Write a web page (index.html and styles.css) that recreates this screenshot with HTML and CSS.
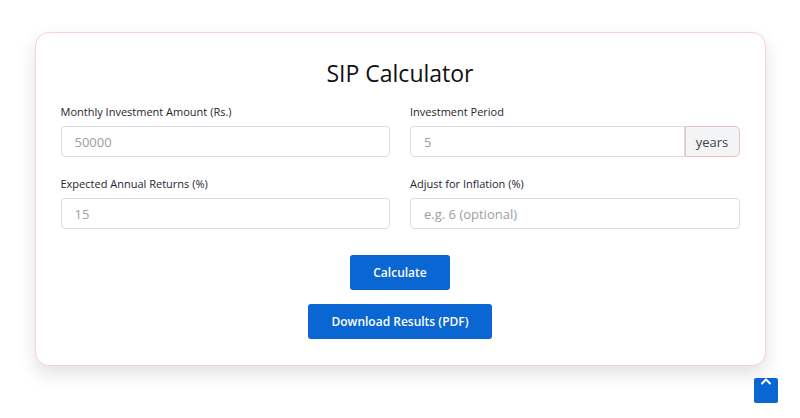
FILE: index.html
```html
<!DOCTYPE html>
<html>
<head>
<meta charset="utf-8">
<link rel="stylesheet" href="styles.css">
</head>
<body>
<div class="card">
  <h1 class="title">SIP Calculator</h1>
  <div class="grid">
    <div class="field">
      <label class="label">Monthly Investment Amount (Rs.)</label>
      <input class="input" placeholder="50000">
    </div>
    <div class="field">
      <label class="label">Investment Period</label>
      <div class="group">
        <input class="input input-group" placeholder="5">
        <span class="addon">years</span>
      </div>
    </div>
    <div class="field">
      <label class="label">Expected Annual Returns (%)</label>
      <input class="input" placeholder="15">
    </div>
    <div class="field">
      <label class="label">Adjust for Inflation (%)</label>
      <input class="input" placeholder="e.g. 6 (optional)">
    </div>
  </div>
  <div class="actions">
    <button class="btn btn-calc">Calculate</button>
    <button class="btn btn-pdf">Download Results (PDF)</button>
  </div>
</div>
<button class="top-btn" aria-label="Scroll to top">
  <svg width="12" height="8" viewBox="0 0 12 8"><path d="M1.5 6 L6 1.5 L10.5 6" fill="none" stroke="#fff" stroke-width="2"/></svg>
</button>
</body>
</html>
```
FILE: styles.css
```css
html, body {
  margin: 0;
  padding: 0;
  background: #ffffff;
  font-family: "Open Sans", "Noto Sans", sans-serif;
}
body {
  padding-top: 32px;
  height: 418px;
  box-sizing: border-box;
  position: relative;
  overflow: hidden;
}
.card {
  width: 731px;
  margin: 0 auto;
  box-sizing: border-box;
  border: 1px solid #f6d3d6;
  border-radius: 14px;
  padding: 22px 25px 26px 25px;
  box-shadow: 0 8px 18px rgba(0, 0, 0, 0.12);
  background: #fff;
}
.title {
  margin: 0 0 13px 0;
  text-align: center;
  font-size: 23px;
  font-weight: 400;
  color: #111;
  line-height: 36px;
}
.grid {
  display: grid;
  grid-template-columns: 1fr 1fr;
  column-gap: 20px;
  row-gap: 19px;
}
.field {
  display: flex;
  flex-direction: column;
}
.label {
  font-size: 11px;
  color: #1f2430;
  line-height: 16px;
  margin-bottom: 6px;
  font-weight: 500;
}
.input {
  height: 31px;
  box-sizing: border-box;
  border: 1px solid #d9dce1;
  border-radius: 4px;
  padding: 0 13px;
  font-family: inherit;
  font-size: 13px;
  color: #333;
  outline: none;
  width: 100%;
}
.input::placeholder {
  color: #9aa0a6;
}
.group {
  display: flex;
}
.input-group {
  flex: 1;
  border-radius: 4px 0 0 4px;
}
.addon {
  width: 55px;
  box-sizing: border-box;
  height: 31px;
  display: flex;
  align-items: center;
  justify-content: center;
  background: #f3f4f6;
  border: 1px solid #f2bcc1;
  border-radius: 0 5px 5px 0;
  font-size: 13px;
  color: #444;
}
.actions {
  display: flex;
  flex-direction: column;
  align-items: center;
  gap: 14px;
  margin-top: 26px;
}
.btn {
  background: #0a66d2;
  color: #fff;
  border: none;
  border-radius: 3px;
  font-family: inherit;
  font-weight: 600;
  font-size: 12px;
  height: 35px;
  padding: 0;
}
.btn-calc {
  width: 100px;
}
.btn-pdf {
  width: 184px;
}
.top-btn {
  position: absolute;
  left: 754px;
  top: 378px;
  width: 24px;
  height: 25px;
  background: #0a66d2;
  border: none;
  border-radius: 2px;
  padding: 0;
  display: flex;
  justify-content: center;
  align-items: flex-start;
}
```
